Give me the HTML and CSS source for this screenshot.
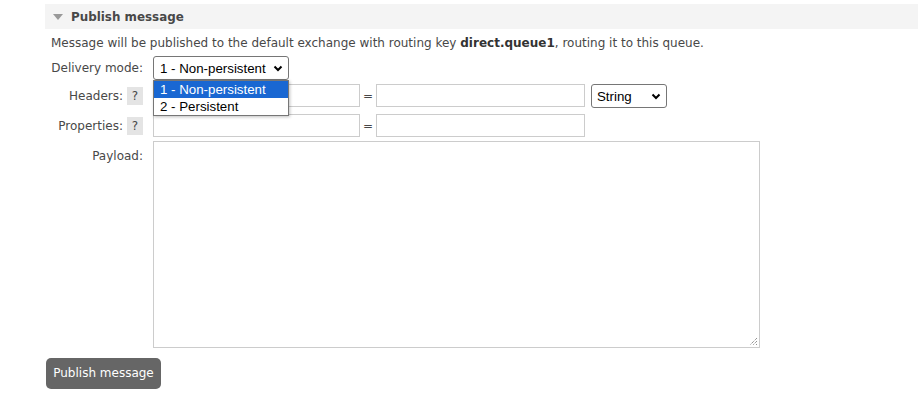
FILE: index.html
```html
<!DOCTYPE html>
<html>
<head>
<meta charset="utf-8">
<link rel="stylesheet" href="styles.css">
</head>
<body>
<div class="section">
  <div class="section-head">
    <span class="tri"></span>
    <h2>Publish message</h2>
  </div>
  <p class="desc">Message will be published to the default exchange with routing key <b>direct.queue1</b>, routing it to this queue.</p>
  <div class="form">
    <div class="row row-delivery">
      <div class="label">Delivery mode:</div>
      <div class="field select-wrap">
        <div class="select sel-mode"><span>1 - Non-persistent</span><svg class="chev" width="10" height="7" viewBox="0 0 10 7"><path d="M1.5 1.5 L5 5 L8.5 1.5" fill="none" stroke="#000" stroke-width="2"/></svg></div>
        <div class="dropdown">
          <div class="opt active">1 - Non-persistent</div>
          <div class="opt">2 - Persistent</div>
        </div>
      </div>
    </div>
    <div class="row row-headers">
      <div class="label">Headers: <span class="help">?</span></div>
      <div class="field pair">
        <div class="input in-key"></div>
        <span class="eq">=</span>
        <div class="input in-val"></div>
        <div class="select sel-type"><span>String</span><svg class="chev" width="10" height="7" viewBox="0 0 10 7"><path d="M1.5 1.5 L5 5 L8.5 1.5" fill="none" stroke="#000" stroke-width="2"/></svg></div>
      </div>
    </div>
    <div class="row row-props">
      <div class="label">Properties: <span class="help">?</span></div>
      <div class="field pair">
        <div class="input in-key"></div>
        <span class="eq">=</span>
        <div class="input in-val"></div>
      </div>
    </div>
    <div class="row row-payload">
      <div class="label label-top">Payload:</div>
      <div class="field">
        <div class="textarea">
          <svg class="grip" width="9" height="9" viewBox="0 0 9 9"><path d="M8 1 L1 8 M8 4 L4 8 M8 7 L7 8" stroke="#666" stroke-width="1" stroke-dasharray="1 1"/></svg>
        </div>
      </div>
    </div>
  </div>
  <div class="button">Publish message</div>
</div>
</body>
</html>
```
FILE: styles.css
```css
html, body {
  margin: 0;
  padding: 0;
  background: #fff;
}
body {
  font-family: "DejaVu Sans", Verdana, sans-serif;
  font-size: 12px;
  color: #484848;
}
.section {
  padding: 4px 0 0 45px;
}
.section-head {
  display: flex;
  align-items: center;
  height: 25px;
  background: #f4f4f4;
  padding-left: 8px;
}
.tri {
  width: 0;
  height: 0;
  border-left: 5px solid transparent;
  border-right: 5px solid transparent;
  border-top: 6px solid #999;
  margin-right: 8px;
  margin-top: 1px;
}
h2 {
  margin: 0;
  font-size: 11.9px;
  font-weight: bold;
  color: #484848;
}
.desc {
  margin: 7px 0 0 6px;
  line-height: 15px;
}
.desc b {
  color: #333;
}
.form {
  margin-top: 5px;
  margin-left: 6px;
}
.row {
  display: flex;
  align-items: center;
}
.label {
  width: 92px;
  text-align: right;
  display: flex;
  justify-content: flex-end;
  align-items: center;
  gap: 4px;
  margin-right: 10px;
  white-space: nowrap;
}
.label-top {
  align-self: flex-start;
  padding-top: 8px;
}
.help {
  display: inline-block;
  width: 16px;
  height: 18px;
  line-height: 18px;
  text-align: center;
  background: #e4e4e4;
  color: #484848;
}
.field {
  position: relative;
}
.select {
  box-sizing: border-box;
  display: flex;
  align-items: center;
  justify-content: space-between;
  border: 1px solid #767676;
  border-radius: 3px;
  background: #fff;
  font-family: "Liberation Sans", Arial, sans-serif;
  font-size: 13.3px;
  color: #000;
  padding: 0 5px 0 6px;
}
.sel-mode {
  width: 136px;
  height: 24px;
}
.sel-type {
  width: 76px;
  height: 24px;
  margin-left: 6px;
  padding-left: 5px;
}
.dropdown {
  position: absolute;
  left: 0;
  top: 24px;
  width: 136px;
  box-sizing: border-box;
  border: 1px solid #767676;
  background: #fff;
  box-shadow: 1px 1px 3px rgba(0,0,0,0.25);
  font-family: "Liberation Sans", Arial, sans-serif;
  font-size: 13.3px;
  color: #000;
  z-index: 2;
}
.opt {
  height: 17px;
  line-height: 17px;
  padding-left: 6px;
}
.opt.active {
  background: #1967d2;
  color: #fff;
}
.row-delivery {
  height: 24px;
}
.row-headers {
  margin-top: 4px;
}
.row-props {
  margin-top: 6px;
}
.row-payload {
  margin-top: 4px;
}
.pair {
  display: flex;
  align-items: center;
}
.input {
  box-sizing: border-box;
  height: 23px;
  border: 1px solid #ccc;
  background: #fff;
}
.in-key {
  width: 207px;
}
.in-val {
  width: 209px;
}
.eq {
  width: 16px;
  text-align: center;
  font-size: 12px;
}
.row-headers .in-key, .row-headers .in-val {
  margin-top: -1px;
}
.textarea {
  position: relative;
  box-sizing: border-box;
  width: 607px;
  height: 207px;
  border: 1px solid #ccc;
  background: #fff;
}
.grip {
  position: absolute;
  right: 1px;
  bottom: 1px;
}
.button {
  display: inline-block;
  margin: 10px 0 0 1px;
  width: 115px;
  height: 31px;
  line-height: 31px;
  text-align: center;
  background: #666;
  color: #fff;
  border-radius: 5px;
  font-size: 12px;
}
```
